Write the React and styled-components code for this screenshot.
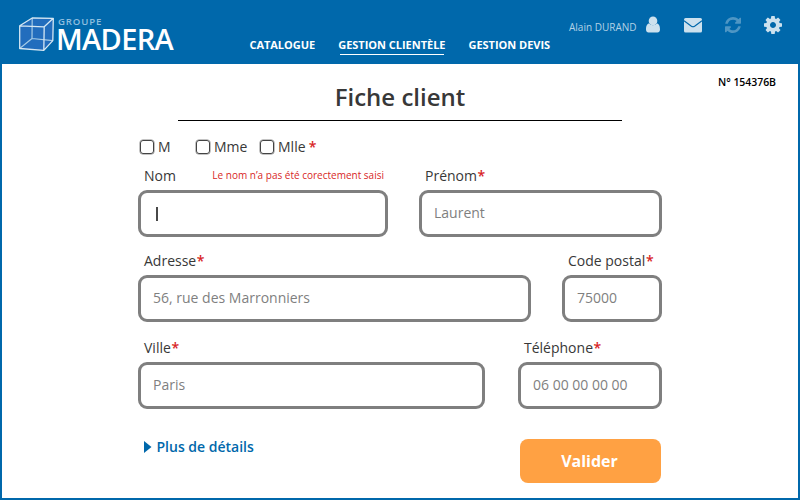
import React from "react";
import styled, { createGlobalStyle } from "styled-components";

const BLUE = "#0068ab";

const GlobalStyle = createGlobalStyle`
  * { box-sizing: border-box; }
  body { margin: 0; background: #fff; }
  button, input { font-family: inherit; }
`;

const Window = styled.div`
  width: 800px;
  height: 500px;
  display: flex;
  flex-direction: column;
  border: solid ${BLUE};
  border-width: 0 2px 2px;
  background: #fff;
  color: #383838;
  font-family: "Open Sans", "Noto Sans", sans-serif;
  overflow: hidden;
`;

const Header = styled.header`
  display: flex;
  flex: 0 0 64px;
  background: ${BLUE};
  color: #fff;
`;

const Brand = styled.div`
  display: flex;
  width: 247px;
  padding: 16px 0 0 16px;
`;

const BrandName = styled.div`
  display: flex;
  flex-direction: column;
  margin-left: 1px;
`;

const Group = styled.span`
  height: 11px;
  padding-left: 2px;
  font-size: 9.6px;
  line-height: 11px;
  font-weight: 600;
  letter-spacing: 0.85px;
  color: #8fbfdf;
`;

const Madera = styled.span`
  font-size: 29px;
  line-height: 23px;
  font-weight: 600;
  letter-spacing: -0.65px;
`;

const Nav = styled.nav`
  display: flex;
  gap: 23px;
  width: 320px;
  padding: 37px 0 0 0.4px;
`;

const NavLink = styled.a`
  display: flex;
  flex-direction: column;
  align-items: center;
  font-size: 11px;
  line-height: 16px;
  font-weight: 700;
  letter-spacing: -0.02px;
  white-space: nowrap;

  &::after {
    content: "";
    width: 104px;
    height: 1px;
    margin-top: 1px;
    background: #fff;
    display: ${(p) => (p.$active ? "block" : "none")};
  }
`;

const Account = styled.div`
  display: flex;
  padding-top: 15px;
  color: #cce1ee;
`;

const UserName = styled.span`
  width: 77px;
  padding-top: 5px;
  font-size: 10px;
  line-height: 15px;
  color: #b3d2e6;
  white-space: nowrap;
`;

const Tool = styled.svg`
  display: block;
  width: ${(p) => p.$w}px;
  height: 20px;
  margin-right: ${(p) => p.$gap || 0}px;
  fill: currentColor;
  opacity: ${(p) => (p.$dim ? 0.38 : 1)};
`;

const TitleBar = styled.div`
  display: grid;
  grid-template-columns: 176px 444px 176px;
  height: 57px;
`;

const Title = styled.h1`
  grid-column: 2;
  margin: 0;
  padding-top: 16px;
  border-bottom: 1px solid #000;
  font-size: 24px;
  line-height: 33px;
  font-weight: 600;
  text-align: center;
`;

const Reference = styled.span`
  padding: 10px 22px 0 0;
  font-size: 10.5px;
  line-height: 16px;
  font-weight: 600;
  letter-spacing: -0.05px;
  color: #000;
  text-align: right;
`;

const Form = styled.form`
  width: 524px;
  margin: 19px 0 0 136px;
  display: flex;
  flex-direction: column;
`;

const Civility = styled.div`
  display: flex;
  height: 14px;
  margin-bottom: 12px;
  padding-left: 2px;
  align-items: center;
`;

const Choice = styled.label`
  display: flex;
  align-items: center;
  gap: 4px;
  width: ${(p) => p.$w}px;
  font-size: 14px;
  line-height: 14px;
`;

const Box = styled.input`
  appearance: none;
  flex: 0 0 14px;
  height: 14px;
  margin: 0;
  border: 1.5px solid #444;
  border-radius: 3px;
  box-shadow: 0 0 0 0.5px #888;
`;

const Required = styled.span`
  margin-left: ${(p) => p.$shift || "0.6px"};
  color: #d81f26;
  font-weight: 600;
`;

const Row = styled.div`
  display: grid;
  grid-template-columns: ${(p) => p.$columns};
  justify-content: space-between;
  margin-bottom: ${(p) => p.$gap}px;
`;

const Field = styled.div`
  display: flex;
  flex-direction: column;
  gap: 4px;
`;

const Caption = styled.div`
  display: flex;
  justify-content: space-between;
  height: 20px;
  padding: 0 4px 0 6px;
  font-size: 14px;
  line-height: 20px;
`;

const ErrorText = styled.span`
  font-size: 10px;
  line-height: 19px;
  font-weight: 500;
  color: #d81f26;
  white-space: nowrap;
`;

const Input = styled.div`
  display: flex;
  align-items: center;
  height: 47px;
  padding: 0 0 2px 12px;
  border: 3px solid #7f7f7f;
  border-radius: 9px;
  font-size: 14px;
  color: #7f7f7f;
  white-space: nowrap;
`;

const Caret = styled.span`
  width: 2px;
  height: 14px;
  margin: 2px 0 0 3px;
  background: #484848;
`;

const Actions = styled.div`
  display: flex;
  justify-content: space-between;
  padding: 0 1px 0 6px;
`;

const More = styled.a`
  display: flex;
  align-items: center;
  gap: 4.5px;
  height: 15px;
  font-size: 14px;
  line-height: 15px;
  font-weight: 600;
  color: ${BLUE};
`;

const Submit = styled.button`
  width: 141px;
  height: 44px;
  padding: 0 2px 0 0;
  border: 0;
  border-radius: 8px;
  background: #ffa143;
  color: #fff;
  font-size: 16px;
  font-weight: 700;
`;

function TextField({ label, value, required, error, focused }) {
  return (
    <Field>
      <Caption>
        <span>
          {label}
          {required && <Required>*</Required>}
        </span>
        {error && <ErrorText>{error}</ErrorText>}
      </Caption>
      <Input>{focused ? <Caret /> : value}</Input>
    </Field>
  );
}

function CubeLogo() {
  return (
    <svg width="37" height="36" viewBox="0 0 37 36" fill="none" strokeLinejoin="round">
      <path d="M1.7 9.8 14.2 2 35.3 2.3 34.8 24.6 25.8 34.4 1.7 32.5Z" fill="#226dbd" />
      <path d="M14.2 2 14 22.5 34.8 24.6M14 22.5 1.7 32.5" stroke="#a5cbe6" strokeWidth="1.2" />
      <path d="M1.7 9.8 14.2 2 35.3 2.3 34.8 24.6 25.8 34.4 1.7 32.5ZM1.7 9.8 26.2 10.8 35.3 2.3M26.2 10.8 25.8 34.4" stroke="#d5e7f3" strokeWidth="1.3" />
    </svg>
  );
}

export default function App() {
  return (
    <Window>
      <GlobalStyle />
      <Header>
        <Brand>
          <CubeLogo />
          <BrandName>
            <Group>GROUPE</Group>
            <Madera>MADERA</Madera>
          </BrandName>
        </Brand>
        <Nav>
          <NavLink>CATALOGUE</NavLink>
          <NavLink $active>GESTION CLIENTÈLE</NavLink>
          <NavLink>GESTION DEVIS</NavLink>
        </Nav>
        <Account>
          <UserName>Alain DURAND</UserName>
          <Tool $w={14} $gap={24} viewBox="0 0 14 20">
            <circle cx="7" cy="5.9" r="4.3" />
            <path d="M3.3 8.6C1.1 8.6 0 11 0 14.5 0 16.4 1.1 17.4 2.5 17.4H11.5C12.9 17.4 14 16.4 14 14.5 14 11 12.9 8.6 10.7 8.6 8.6 10.8 5.4 10.8 3.3 8.6Z" />
          </Tool>
          <Tool $w={18} $gap={23} viewBox="0 0 18 20">
            <rect y="3" width="18" height="14.6" rx="1.6" />
            <path d="M0 5.7 7.4 11.2Q9 12.3 10.6 11.2L18 5.7" fill="none" stroke={BLUE} strokeWidth="1.2" />
          </Tool>
          <Tool $w={16} $gap={23} $dim viewBox="128 -57 1536 1906">
            <path d="M1639 1056q0 5-1 7-64 268-268 434.5t-478 166.5q-146 0-282.5-55t-243.5-157l-129 129q-19 19-45 19t-45-19-19-45v-448q0-26 19-45t45-19h448q26 0 45 19t19 45-19 45l-137 137q71 66 161 102t187 36q134 0 250-65t186-179q11-17 53-117 8-23 30-23h192q13 0 22.5 9.5t9.5 22.5zm25-800v448q0 26-19 45t-45 19h-448q-26 0-45-19t-19-45 19-45l138-138q-148-137-349-137-134 0-250 65t-186 179q-11 17-53 117-8 23-30 23h-199q-13 0-22.5-9.5t-9.5-22.5v-7q65-268 270-434.5t480-166.5q146 0 284 55.5t245 156.5l130-129q19-19 45-19t45 19 19 45z" />
          </Tool>
          <Tool $w={18} viewBox="128 43 1536 1706">
            <path d="M1152 896q0-106-75-181t-181-75-181 75-75 181 75 181 181 75 181-75 75-181zm512-109v222q0 12-8 23t-20 13l-185 28q-19 54-39 91 35 50 107 138 10 12 10 25t-9 23q-27 37-99 108t-94 71q-12 0-26-9l-138-108q-44 23-91 38-16 136-29 186-7 28-36 28h-222q-14 0-24.5-8.5t-11.5-21.5l-28-184q-49-16-90-37l-141 107q-10 9-25 9-14 0-25-11-126-114-165-168-7-10-7-23 0-12 8-23 15-21 51-66.5t54-70.5q-27-50-41-99l-183-27q-13-2-21-12.5t-8-23.5v-222q0-12 8-23t19-13l186-28q14-46 39-92-40-57-107-138-10-12-10-24 0-10 9-23 26-36 98.5-107.5t94.5-71.5q13 0 26 10l138 107q44-23 91-38 16-136 29-186 7-28 36-28h222q14 0 24.5 8.5t11.5 21.5l28 184q49 16 90 37l142-107q9-9 24-9 13 0 25 10 129 119 165 170 7 8 7 22 0 12-8 23-15 21-51 66.5t-54 70.5q26 50 41 98l183 28q13 2 21 12.5t8 23.5z" />
          </Tool>
        </Account>
      </Header>

      <TitleBar>
        <Title>Fiche client</Title>
        <Reference>N° 154376B</Reference>
      </TitleBar>

      <Form>
        <Civility>
          <Choice $w={56}><Box type="checkbox" />M</Choice>
          <Choice $w={64}><Box type="checkbox" />Mme</Choice>
          <Choice $w={64}><Box type="checkbox" />Mlle <Required $shift="-0.8px">*</Required></Choice>
        </Civility>
        <Row $columns="250px 243px" $gap={14}>
          <TextField label="Nom" focused error="Le nom n’a pas été corectement saisi" />
          <TextField label="Prénom" required value="Laurent" />
        </Row>
        <Row $columns="393px 100px" $gap={16}>
          <TextField label="Adresse" required value="56, rue des Marronniers" />
          <TextField label="Code postal" required value="75000" />
        </Row>
        <Row $columns="347px 144px" $gap={30}>
          <TextField label="Ville" required value="Paris" />
          <TextField label="Téléphone" required value="06 00 00 00 00" />
        </Row>
        <Actions>
          <More>
            <svg width="8" height="12" viewBox="0 0 8 12"><path d="M0 0 7.5 6 0 12Z" fill={BLUE} /></svg>
            Plus de détails
          </More>
          <Submit type="button">Valider</Submit>
        </Actions>
      </Form>
    </Window>
  );
}
